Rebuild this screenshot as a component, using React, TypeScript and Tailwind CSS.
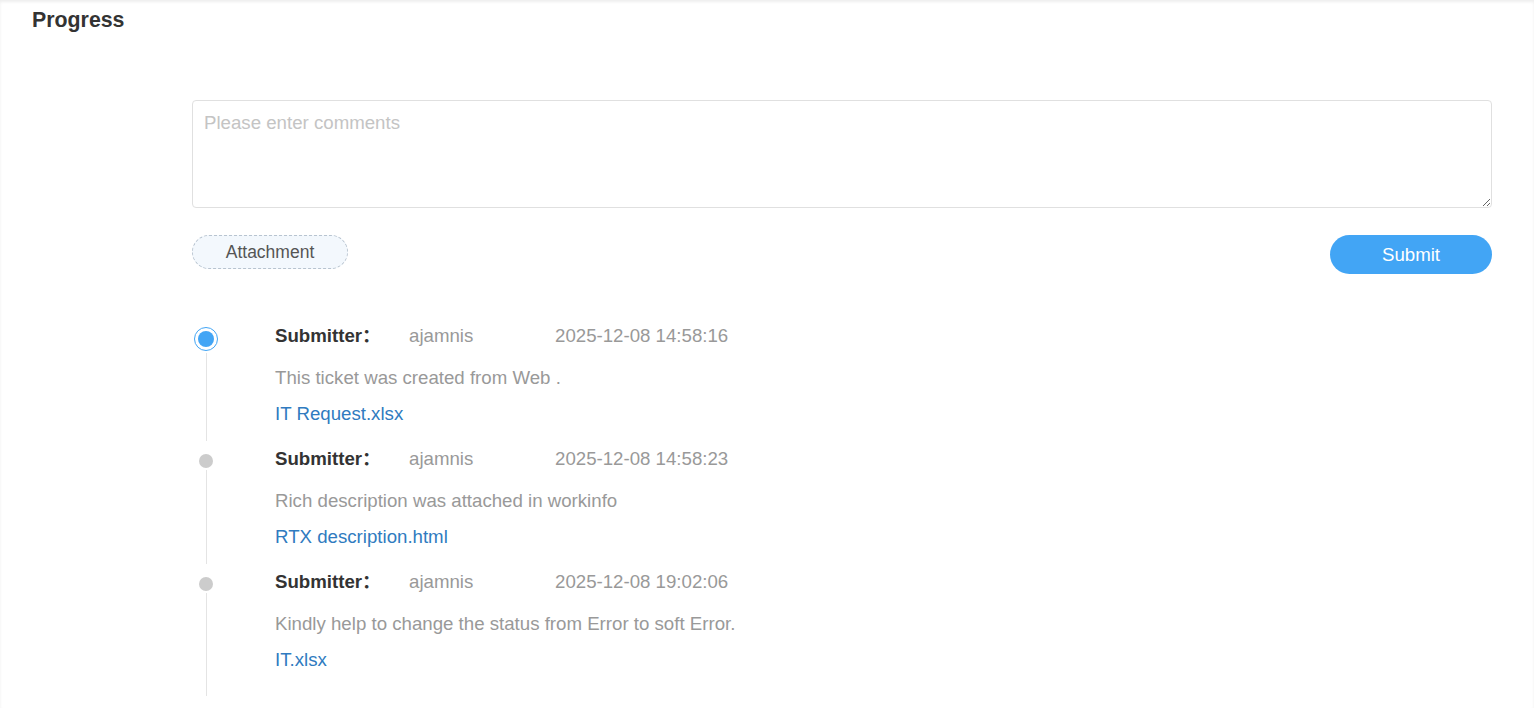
import React from "react";

type Entry = {
  who: string;
  time: string;
  text: string;
  file: string;
};

const entries: Entry[] = [
  {
    who: "ajamnis",
    time: "2025-12-08 14:58:16",
    text: "This ticket was created from Web .",
    file: "IT Request.xlsx",
  },
  {
    who: "ajamnis",
    time: "2025-12-08 14:58:23",
    text: "Rich description was attached in workinfo",
    file: "RTX description.html",
  },
  {
    who: "ajamnis",
    time: "2025-12-08 19:02:06",
    text: "Kindly help to change the status from Error to soft Error.",
    file: "IT.xlsx",
  },
];

const font = "font-['Liberation_Sans','Noto_Sans_CJK_SC',Arial,sans-serif]";

function TimelineItem({ entry, active, last }: { entry: Entry; active: boolean; last: boolean }) {
  return (
    <div className="flex">
      {/* dot + line */}
      <div className="w-[28px] shrink-0 flex flex-col items-center">
        {active ? (
          <div className="mt-[9px] w-[24px] h-[24px] rounded-full border border-[#42a5f5] p-[3px] bg-white">
            <div className="w-full h-full rounded-full bg-[#42a5f5]" />
          </div>
        ) : (
          <div className="mt-[13px] w-[14px] h-[14px] rounded-full bg-[#cccccc]" />
        )}
        <div className="flex-1 w-px bg-[#e4e4e4] mt-[2px]" />
      </div>

      <div className={`ml-[55px] text-[18.67px] ${last ? "pb-[18px]" : "pb-[9px]"}`}>
        <div className="flex leading-[36px]">
          <span className="w-[134px] font-bold text-[#333333]">Submitter：</span>
          <span className="w-[146px] text-[#999999]">{entry.who}</span>
          <span className="text-[#999999]">{entry.time}</span>
        </div>
        <div className="mt-[6px] leading-[36px] text-[#999999]">{entry.text}</div>
        <a href="#" className="block leading-[36px] text-[#2f7bc0]">
          {entry.file}
        </a>
      </div>
    </div>
  );
}

export default function App() {
  return (
    <div className={`${font} min-h-screen bg-white shadow-[inset_0_2px_3px_rgba(0,0,0,0.07)]`}>
      <div className="px-[32px] pt-[8px]">
        <h2 className="text-[21.33px] leading-[24px] font-bold text-[#333333]">Progress</h2>
      </div>

      <div className="ml-[192px] mr-[42px] mt-[68px]">
        <textarea
          placeholder="Please enter comments"
          className="block w-full h-[108px] rounded-[4px] border border-[#e0e0e0] px-[11px] pt-[11px] pb-[9px] text-[18.67px] leading-[22px] text-[#333333] placeholder:text-[#c4c4c4] outline-none resize-y"
        />

        <div className="mt-[27px] flex items-start justify-between">
          <button className="w-[156px] h-[34px] rounded-full border border-dashed border-[#b8c4d0] bg-[#f3f8fd] text-[17.5px] text-[#555555]">
            Attachment
          </button>
          <button className="w-[162px] h-[39px] rounded-full bg-[#42a5f5] text-[18.67px] text-white">
            Submit
          </button>
        </div>

        <div className="mt-[44px]">
          {entries.map((e, i) => (
            <TimelineItem key={i} entry={e} active={i === 0} last={i === entries.length - 1} />
          ))}
        </div>
      </div>
    </div>
  );
}
